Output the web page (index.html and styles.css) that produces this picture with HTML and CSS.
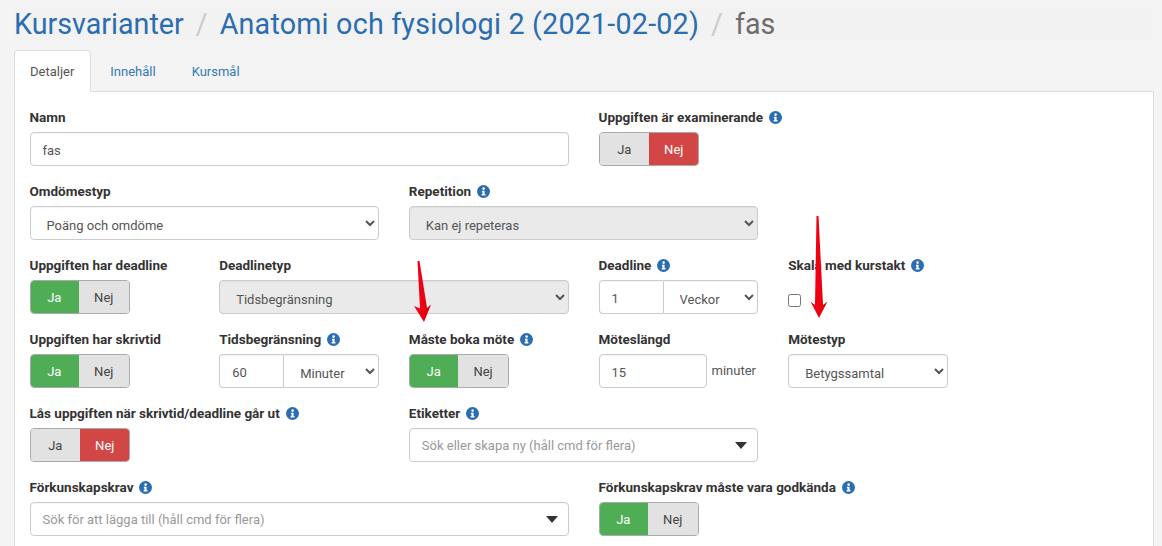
FILE: index.html
```html
<!DOCTYPE html>
<html lang="sv">
<head>
<meta charset="utf-8">
<title>fas</title>
<link rel="stylesheet" href="styles.css">
</head>
<body>
<svg width="0" height="0" class="defs" aria-hidden="true"><symbol id="info" viewBox="0 0 24 24"><circle cx="12" cy="12" r="12" fill="#2a6db0"/><path fill="#fff" d="M12.2 4.2a2.4 2.4 0 1 1 0 4.8 2.4 2.4 0 0 1 0-4.8zM9 10.600h5v6.200h1.600v2.600H8.600v-2.600h1.600v-3.600H9z"/></symbol></svg>
<ol class="crumbs">
  <li><a href="#">Kursvarianter</a></li>
  <li class="sep">/</li>
  <li><a class="course" href="#">Anatomi och fysiologi 2 (2021-02-02)</a></li>
  <li class="sep">/</li>
  <li class="current">fas</li>
</ol>
<ul class="tabs">
  <li class="tab active">Detaljer</li>
  <li class="tab">Innehåll</li>
  <li class="tab">Kursmål</li>
</ul>
<main class="panel">
  <div class="row">
    <div class="field span3"><label>Namn</label><input class="ctl" type="text" value="fas"></div>
    <div class="field span3"><label>Uppgiften är examinerande <svg class="i"><use href="#info"/></svg></label><div class="toggle"><span class="off">Ja</span><span class="no">Nej</span></div></div>
  </div>
  <div class="row">
    <div class="field span2"><label>Omdömestyp</label><select class="ctl sel"><option>Poäng och omdöme</option></select></div>
    <div class="field span2"><label>Repetition <svg class="i"><use href="#info"/></svg></label><select class="ctl sel" disabled><option>Kan ej repeteras</option></select></div>
  </div>
  <div class="row">
    <div class="field"><label>Uppgiften har deadline</label><div class="toggle"><span class="yes">Ja</span><span class="off">Nej</span></div></div>
    <div class="field span2"><label>Deadlinetyp</label><select class="ctl sel" disabled><option>Tidsbegränsning</option></select></div>
    <div class="field"><label>Deadline <svg class="i"><use href="#info"/></svg></label><div class="group"><input class="ctl num" type="text" value="1"><select class="ctl sel unit"><option>Veckor</option></select></div></div>
    <div class="field"><label>Skala med kurstakt <svg class="i"><use href="#info"/></svg></label><div class="checkwrap"><input class="check" type="checkbox"></div></div>
  </div>
  <div class="row">
    <div class="field"><label>Uppgiften har skrivtid</label><div class="toggle"><span class="yes">Ja</span><span class="off">Nej</span></div></div>
    <div class="field"><label>Tidsbegränsning <svg class="i"><use href="#info"/></svg></label><div class="group"><input class="ctl num" type="text" value="60"><select class="ctl sel unit"><option>Minuter</option></select></div></div>
    <div class="field"><label>Måste boka möte <svg class="i"><use href="#info"/></svg></label><div class="toggle"><span class="yes">Ja</span><span class="off">Nej</span></div></div>
    <div class="field"><label>Möteslängd</label><div class="suffixed"><input class="ctl len" type="text" value="15"><span class="suffix">minuter</span></div></div>
    <div class="field"><label>Mötestyp</label><select class="ctl sel type"><option>Betygssamtal</option></select></div>
  </div>
  <div class="row">
    <div class="field span2"><label>Lås uppgiften när skrivtid/deadline går ut <svg class="i"><use href="#info"/></svg></label><div class="toggle"><span class="off">Ja</span><span class="no">Nej</span></div></div>
    <div class="field span2"><label>Etiketter <svg class="i"><use href="#info"/></svg></label><div class="ctl combo"><span>Sök eller skapa ny (håll cmd för flera)</span><i class="caret"></i></div></div>
  </div>
  <div class="row">
    <div class="field span3"><label>Förkunskapskrav <svg class="i"><use href="#info"/></svg></label><div class="ctl combo"><span>Sök för att lägga till (håll cmd för flera)</span><i class="caret"></i></div></div>
    <div class="field span3"><label>Förkunskapskrav måste vara godkända <svg class="i"><use href="#info"/></svg></label><div class="toggle"><span class="yes">Ja</span><span class="off">Nej</span></div></div>
  </div>
</main>
<svg class="arrows" width="1162" height="546" viewBox="0 0 1162 546" aria-hidden="true">
  <defs><linearGradient id="red" x1="0" x2="1" y1="0" y2="0"><stop offset="0" stop-color="#f50012"/><stop offset=".55" stop-color="#ee0010"/><stop offset="1" stop-color="#c80008"/></linearGradient></defs>
  <path fill="url(#red)" d="M417.500 261 419.500 261 427 308 431 304.500 424 322 414 306 420 308.500z"/>
  <path fill="url(#red)" d="M816.500 216 818.500 216 823 305 827.500 301.500 819 318 810.500 301.500 815 305z"/>
</svg>
</body>
</html>
```
FILE: styles.css
```css
* { box-sizing: border-box; }
html, body { margin: 0; height: 546px; overflow: hidden; }
body { position: relative; background: #f4f4f4; color: #333; font: 13px/20px Roboto, "Liberation Sans", sans-serif; padding: 7px 8px 0 14px; }
.defs { position: absolute; }
.crumbs { list-style: none; display: flex; gap: 12px; margin: 0 1px 10px 0; padding: 2px 0 0; height: 33px; align-items: center; background: #f2f2f2; border-radius: 4px; font-size: 28.700px; line-height: 31px; color: #6d6d6d; }
.crumbs a { color: #2a6db0; text-decoration: none; }
.crumbs .course { letter-spacing: .2px; }
.crumbs .sep { color: #ccc; }
.tabs { list-style: none; display: flex; margin: 0; padding: 0; height: 41px; }
.tab { padding: 11px 16px 10px; margin-right: 2px; color: #337ab7; border: 1px solid transparent; height: 42px; }
.tab.active { color: #555; background: #fff; border-color: #ddd #ddd #fff; border-radius: 4px 4px 0 0; position: relative; z-index: 1; padding: 11px 16px 10px 15px; }
.panel { background: #fff; border: 1px solid #ddd; padding: 15px 0 0; height: 480px; }
.row { display: grid; grid-template-columns: repeat(6, 1fr); margin: 0 .5px 0 -.5px; }
.field { padding: 0 15px; height: 74px; min-width: 0; }
.span2 { grid-column: span 2; }
.span3 { grid-column: span 3; }
label { display: flex; align-items: center; gap: 6px; height: 20px; margin-bottom: 5px; font-size: 13.500px; font-weight: 700; color: #333; white-space: nowrap; }
.i { width: 13px; height: 13px; flex: none; }
.ctl { display: block; width: 100%; height: 34px; border: 1px solid #ccc; border-radius: 4px; background: #fff; color: #555; font: 13px/20px Roboto, "Liberation Sans", sans-serif; padding: 7px 12px 5px; box-shadow: inset 0 1px 1px rgba(0,0,0,.04); }
.sel { padding-top: 9px; padding-bottom: 5px; }
select:disabled { background: #eaeaea; opacity: 1; color: #555; }
.toggle { display: flex; width: 100px; height: 34px; border: 1px solid #aaa; border-radius: 4px; overflow: hidden; }
.toggle span { flex: 1; display: flex; align-items: center; justify-content: center; padding-top: 2px; }
.off { background: #e2e2e2; color: #444; }
.yes { background: #4fae55; color: #fff; margin: -1px 0 -1px -1px; }
.no { background: #d24646; color: #fff; margin: -1px -1px -1px 0; }
.group { display: flex; }
.group .num { width: 64px; flex: none; border-radius: 4px 0 0 4px; border-right: 0; }
.group .unit { flex: 1; min-width: 0; border-radius: 0 4px 4px 0; }
.checkwrap { height: 34px; display: flex; align-items: center; }
.check { width: 13px; height: 13px; margin: 7px 0 0; }
.suffixed { display: flex; align-items: center; gap: 5px; }
.len { width: 108px; flex: none; }
.suffix { color: #555; white-space: nowrap; }
.type { width: 160px; }
.combo { display: flex; align-items: center; justify-content: space-between; color: #999; padding-right: 10px; }
.caret { width: 0; height: 0; border: 6px solid transparent; border-top: 7px solid #333; border-bottom: 0; margin-top: -2px; }
.arrows { position: absolute; left: 0; top: 0; pointer-events: none; }
```
